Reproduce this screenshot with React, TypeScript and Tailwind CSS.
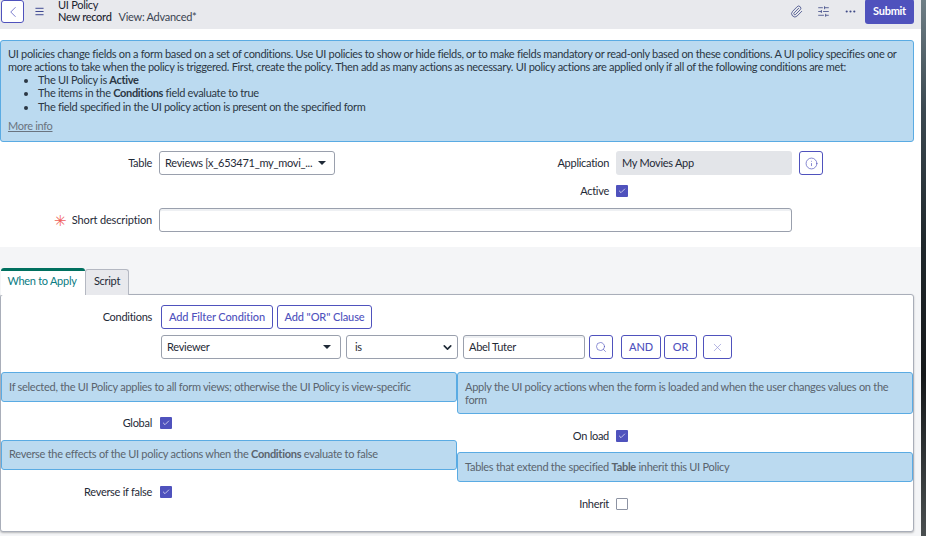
import { Check, ChevronDown, ChevronLeft, Ellipsis, Info, Menu, Paperclip, Search, SlidersHorizontal, X } from "lucide-react";
import type { ReactNode } from "react";

const outlineBtn = "flex h-6 items-center justify-center rounded-[3px] border border-[#4f52bd] bg-white text-[#4f52bd] tracking-[-0.1px]";

function Caret() {
  return <span className="h-0 w-0 border-x-[4px] border-t-[4px] border-x-transparent border-t-[#1f2a37]" />;
}

function Checkbox({ checked = true }: { checked?: boolean }) {
  if (!checked) {
    return <span className="block h-3 w-3 rounded-[1px] border border-[#8d93a3] bg-white" />;
  }
  return (
    <span className="flex h-3 w-3 items-center justify-center rounded-[1px] bg-[#4f52bd]">
      <Check className="h-2 w-2 text-white" strokeWidth={2} />
    </span>
  );
}

function Hint({ children, className }: { children: ReactNode; className: string }) {
  return (
    <div className={`rounded-[3px] border border-[#5aabe3] bg-[#bbdaf0] px-[7px] leading-[13px] text-[#5a646e] ${className}`}>
      {children}
    </div>
  );
}

function CheckRow({ label, labelWidth, checked, className }: { label: string; labelWidth: string; checked?: boolean; className: string }) {
  return (
    <div className={`flex items-center gap-[7px] ${className}`}>
      <span className={`text-right text-[#1f2a37] ${labelWidth}`}>{label}</span>
      <Checkbox checked={checked} />
    </div>
  );
}

export default function App() {
  return (
    <div className="flex h-[536px] w-[926px] overflow-hidden bg-white font-['Lato','Open_Sans',sans-serif] text-[11px] tracking-[-0.28px] text-[#1f2a37]">
      <div className="w-[921px] shrink-0">
        {/* Top bar */}
        <header className="flex h-[29px] items-start overflow-hidden bg-[#e8e9ed] pr-[7px]">
          <button className="ml-px flex h-[23px] w-[23px] items-center justify-center rounded-[3px] border border-[#4f52bd] bg-white text-[#4f52bd]">
            <ChevronLeft className="h-[18px] w-[18px]" strokeWidth={1} />
          </button>
          <Menu className="ml-[10px] mt-[6px] h-[11px] w-[11px] text-[#2f3a8a]" strokeWidth={2} />
          <div className="ml-[13px] -mt-px leading-[12px] text-[#1b2430]">
            <div>UI Policy</div>
            <div>
              <span className="font-medium">New record</span>
              <span className="ml-[7px] text-[#3b4552]">View: Advanced*</span>
            </div>
          </div>
          <div className="ml-auto flex h-[23px] items-center gap-[14px] text-[#3f4a86]">
            <Paperclip className="h-[13px] w-[13px]" strokeWidth={1.5} />
            <SlidersHorizontal className="h-[13px] w-[13px]" strokeWidth={1.5} />
            <Ellipsis className="h-[13px] w-[13px]" strokeWidth={2} />
            <button className="-ml-[6px] h-[25px] w-[49px] shrink-0 rounded-[3px] bg-[#4f52bd] font-bold text-white">Submit</button>
          </div>
        </header>

        {/* Intro message */}
        <div className="mt-[11px] h-[102px] w-[914px] rounded-[3px] border border-[#5aabe3] bg-[#bbdaf0] pl-[7px] pr-2 pt-[6px] leading-[13px] tracking-[-0.31px] text-[#2b3744]">
          <p>
            UI policies change fields on a form based on a set of conditions. Use UI policies to show or hide fields, or to make fields mandatory or read-only based on these conditions. A UI policy specifies one or more actions to take when the policy is triggered. First, create the policy. Then add as many actions as necessary. UI policy actions are applied only if all of the following conditions are met:
          </p>
          <ul className="ml-[30px] list-disc">
            <li>The UI Policy is <b className="font-bold">Active</b></li>
            <li>The items in the <b className="font-bold">Conditions</b> field evaluate to true</li>
            <li className="mt-px">The field specified in the UI policy action is present on the specified form</li>
          </ul>
          <a className="mt-[6px] block w-fit text-[#6a7480] underline">More info</a>
        </div>

        {/* Form fields */}
        <section className="h-[105px] pt-[9px]">
          <div className="flex h-6">
            <div className="flex w-[335px] items-center gap-[7px]">
              <span className="w-[152px] text-right">Table</span>
              <div className="flex h-6 w-[176px] items-center justify-between rounded-[3px] border border-[#9aa0ad] bg-white pl-[5px] pr-2">
                <span className="whitespace-nowrap">Reviews [x_653471_my_movi_...</span>
                <Caret />
              </div>
            </div>
            <div className="flex items-center gap-[7px]">
              <span className="w-[274px] text-right">Application</span>
              <div className="flex h-6 w-[176px] items-center rounded-[3px] bg-[#e3e5e9] px-[6px]">My Movies App</div>
              <button className={`${outlineBtn} w-6`}>
                <Info className="h-[13px] w-[13px]" strokeWidth={1.25} />
              </button>
            </div>
          </div>
          <CheckRow label="Active" labelWidth="w-[609px]" className="mt-[9px] h-[14px]" />
          <div className="mt-[10px] flex items-center gap-[7px]">
            <span className="flex w-[152px] items-center justify-end gap-[5px] tracking-[-0.15px]">
              <span className="text-[15px] leading-[12px] text-[#f0605a]">✳</span>
              Short description
            </span>
            <input readOnly className="h-6 w-[633px] rounded-[3px] border border-[#9aa0ad] bg-white shadow-[inset_0_2px_0_#eef0f3] outline-none" />
          </div>
        </section>

        {/* Tabs */}
        <section className="h-[289px] bg-[#f4f5f7] pt-[21px]">
          <div className="relative z-10 flex h-[27px] items-end pl-px">
            <div className="flex h-[27px] w-[84px] items-center justify-center rounded-t-[3px] border-t-[3px] border-[#00705f] bg-white pb-[3px] pr-[2px] text-[#0a7c83]">When to Apply</div>
            <div className="flex h-[26px] w-[44px] items-center justify-center rounded-t-[3px] border border-b-0 border-[#b4b8c2] bg-[#e8e9ed] pb-[2px]">Script</div>
          </div>

          <div className="-mt-px h-[238px] w-[914px] rounded-[3px] border border-[#a9aeb9] bg-white pt-[10px] shadow-[0_1px_2px_rgba(0,0,0,0.25)]">
            <div className="flex h-6 items-center">
              <span className="w-[151px] text-right">Conditions</span>
              <button className={`${outlineBtn} ml-[9px] w-[112px] font-medium`}>Add Filter Condition</button>
              <button className={`${outlineBtn} ml-1 w-[95px] font-medium`}>Add "OR" Clause</button>
            </div>
            <div className="ml-[160px] mt-[6px] flex h-6 items-center">
              <div className="flex h-6 w-[180px] items-center justify-between rounded-[3px] border border-[#9aa0ad] pl-[5px] pr-[9px]">
                <span>Reviewer</span>
                <Caret />
              </div>
              <div className="ml-[5px] flex h-6 w-[112px] items-center justify-between rounded-[3px] border border-[#9aa0ad] pl-2 pr-[3px]">
                <span>is</span>
                <ChevronDown className="h-[13px] w-[13px]" strokeWidth={3} />
              </div>
              <div className="ml-[5px] flex h-6 w-[122px] items-center rounded-[3px] border border-[#9aa0ad] px-[5px] shadow-[inset_0_2px_0_#eef0f3]">Abel Tuter</div>
              <button className={`${outlineBtn} ml-1 w-6`}>
                <Search className="h-3 w-3" strokeWidth={1.25} />
              </button>
              <button className={`${outlineBtn} ml-2 w-10 font-medium`}>AND</button>
              <button className={`${outlineBtn} ml-[3px] w-[33px] font-medium`}>OR</button>
              <button className={`${outlineBtn} ml-[6px] w-[29px]`}>
                <X className="h-[13px] w-[13px] opacity-60" strokeWidth={1.25} />
              </button>
            </div>

            <div className="mt-[13px] flex">
              <div className="w-[456px]">
                <Hint className="h-[30px] pt-[7px]">If selected, the UI Policy applies to all form views; otherwise the UI Policy is view-specific</Hint>
                <CheckRow label="Global" labelWidth="mr-px w-[151px]" className="mt-[14px] h-[14px]" />
                <Hint className="mt-[10px] h-[30px] pt-[6px]">Reverse the effects of the UI policy actions when the <b className="font-bold">Conditions</b> evaluate to false</Hint>
                <CheckRow label="Reverse if false" labelWidth="mr-px w-[151px]" className="mt-[15px] h-[14px]" />
              </div>
              <div className="w-[456px]">
                <Hint className="h-[42px] pt-[7px]">Apply the UI policy actions when the form is loaded and when the user changes values on the form</Hint>
                <CheckRow label="On load" labelWidth="w-[152px]" className="mt-[15px] h-[14px]" />
                <Hint className="mt-[9px] h-[30px] pt-[7px]">Tables that extend the specified <b className="font-bold">Table</b> inherit this UI Policy</Hint>
                <CheckRow label="Inherit" labelWidth="w-[152px]" className="mt-[15px] h-[14px]" checked={false} />
              </div>
            </div>
          </div>
        </section>
      </div>

      {/* Desktop wallpaper sliver */}
      <div className="flex-1 bg-[linear-gradient(180deg,#6f7f86_0%,#3d4a52_20%,#20282c_45%,#15181a_70%,#4a4f50_100%)]" />
    </div>
  );
}
